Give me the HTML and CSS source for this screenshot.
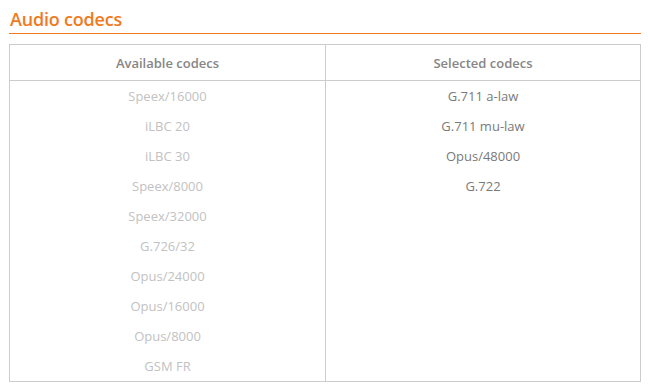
FILE: index.html
```html
<!DOCTYPE html>
<html lang="en">
<head>
    <meta charset="UTF-8">
    <title>Audio codecs</title>
    <link rel="stylesheet" href="styles.css">
</head>
<body>
    <div class="section">
        <h2 class="section-title">Audio codecs</h2>

        <div class="codecs">
            <div class="codec-column">
                <div class="codec-header">Available codecs</div>
                <ul class="codec-list available">
                    <li>Speex/16000</li>
                    <li>iLBC 20</li>
                    <li>iLBC 30</li>
                    <li>Speex/8000</li>
                    <li>Speex/32000</li>
                    <li>G.726/32</li>
                    <li>Opus/24000</li>
                    <li>Opus/16000</li>
                    <li>Opus/8000</li>
                    <li>GSM FR</li>
                </ul>
            </div>
            <div class="codec-column">
                <div class="codec-header">Selected codecs</div>
                <ul class="codec-list selected">
                    <li>G.711 a-law</li>
                    <li>G.711 mu-law</li>
                    <li>Opus/48000</li>
                    <li>G.722</li>
                </ul>
            </div>
        </div>
    </div>
</body>
</html>
```

FILE: styles.css
```css
* {
    margin: 0;
    padding: 0;
    box-sizing: border-box;
}

body {
    font-family: 'Open Sans', 'Noto Sans', sans-serif;
    background: #fff;
    color: #777;
}

.section {
    width: 641px;
    padding-left: 9px;
}

.section-title {
    font-size: 18px;
    font-weight: 600;
    letter-spacing: -0.2px;
    color: #f07a22;
    line-height: 26px;
    padding: 6px 0 1px 1px;
    border-bottom: 1px solid #ef7b26;
}

.codecs {
    display: grid;
    grid-template-columns: 315px 1fr;
    margin-top: 10px;
    border: 1px solid #cccccc;
    height: 338px;
}

.codec-column + .codec-column {
    border-left: 1px solid #cccccc;
}

.codec-header {
    height: 36px;
    line-height: 36px;
    text-align: center;
    font-size: 13px;
    font-weight: 600;
    color: #868686;
    border-bottom: 1px solid #cccccc;
}

.codec-list {
    list-style: none;
}

.codec-list li {
    height: 30px;
    line-height: 30px;
    text-align: center;
    font-size: 13px;
}

.available li {
    color: #c2c2c2;
}

.selected li {
    color: #7a7a7a;
}
```
